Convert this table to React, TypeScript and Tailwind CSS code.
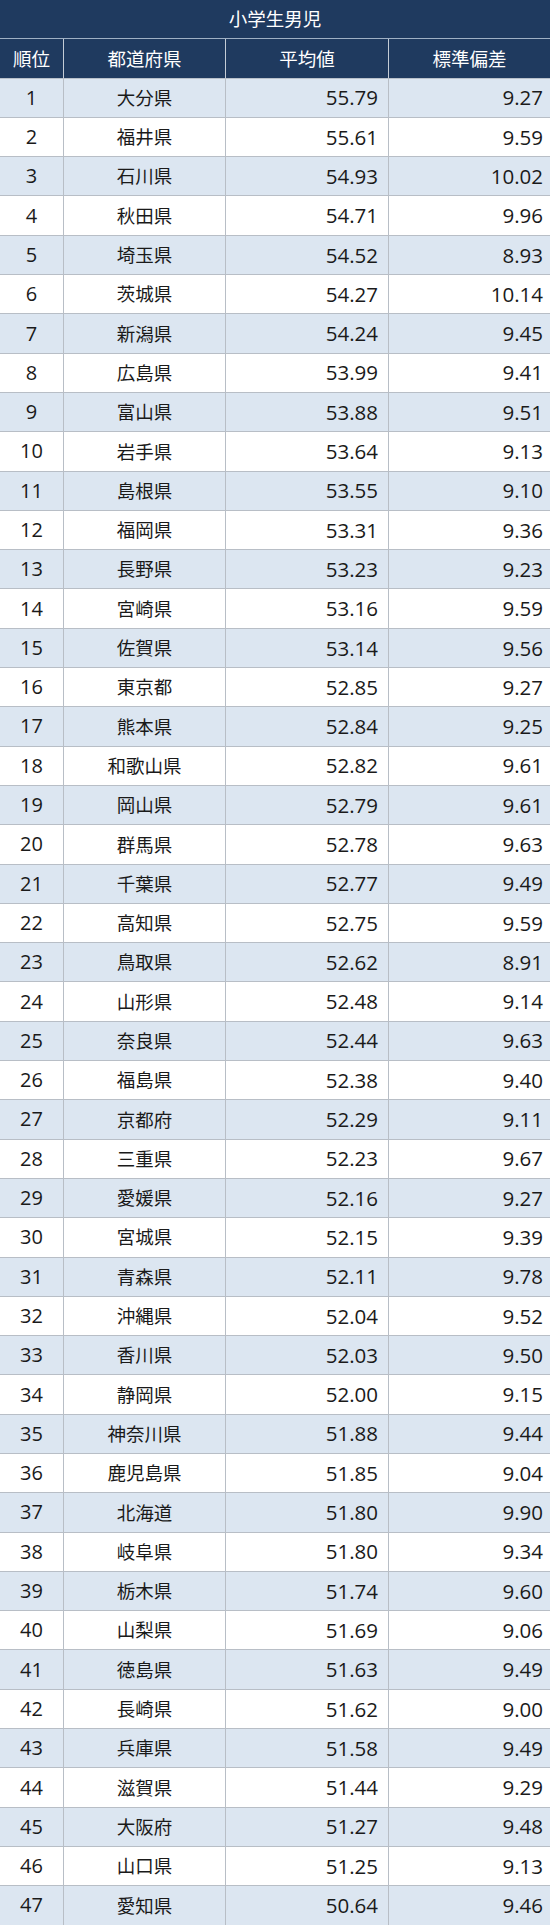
const ROWS: [string, string, string][] = [
  ['大分県', '55.79', '9.27'],
  ['福井県', '55.61', '9.59'],
  ['石川県', '54.93', '10.02'],
  ['秋田県', '54.71', '9.96'],
  ['埼玉県', '54.52', '8.93'],
  ['茨城県', '54.27', '10.14'],
  ['新潟県', '54.24', '9.45'],
  ['広島県', '53.99', '9.41'],
  ['富山県', '53.88', '9.51'],
  ['岩手県', '53.64', '9.13'],
  ['島根県', '53.55', '9.10'],
  ['福岡県', '53.31', '9.36'],
  ['長野県', '53.23', '9.23'],
  ['宮崎県', '53.16', '9.59'],
  ['佐賀県', '53.14', '9.56'],
  ['東京都', '52.85', '9.27'],
  ['熊本県', '52.84', '9.25'],
  ['和歌山県', '52.82', '9.61'],
  ['岡山県', '52.79', '9.61'],
  ['群馬県', '52.78', '9.63'],
  ['千葉県', '52.77', '9.49'],
  ['高知県', '52.75', '9.59'],
  ['鳥取県', '52.62', '8.91'],
  ['山形県', '52.48', '9.14'],
  ['奈良県', '52.44', '9.63'],
  ['福島県', '52.38', '9.40'],
  ['京都府', '52.29', '9.11'],
  ['三重県', '52.23', '9.67'],
  ['愛媛県', '52.16', '9.27'],
  ['宮城県', '52.15', '9.39'],
  ['青森県', '52.11', '9.78'],
  ['沖縄県', '52.04', '9.52'],
  ['香川県', '52.03', '9.50'],
  ['静岡県', '52.00', '9.15'],
  ['神奈川県', '51.88', '9.44'],
  ['鹿児島県', '51.85', '9.04'],
  ['北海道', '51.80', '9.90'],
  ['岐阜県', '51.80', '9.34'],
  ['栃木県', '51.74', '9.60'],
  ['山梨県', '51.69', '9.06'],
  ['徳島県', '51.63', '9.49'],
  ['長崎県', '51.62', '9.00'],
  ['兵庫県', '51.58', '9.49'],
  ['滋賀県', '51.44', '9.29'],
  ['大阪府', '51.27', '9.48'],
  ['山口県', '51.25', '9.13'],
  ['愛知県', '50.64', '9.46'],
];

const JP = "font-['Noto_Sans_CJK_JP',sans-serif]";
const NUM = "font-['Open_Sans','Noto_Sans_CJK_JP',sans-serif]";

export default function App() {
  return (
    <div className="w-[550px] bg-white text-[#1a1a1a]">
      {/* タイトル */}
      <div
        className={`flex h-[39.3px] items-center justify-center border-b border-[#9fb0c4] bg-[#1f3a5f] text-[18.5px] text-white ${JP}`}
      >
        小学生男児
      </div>

      {/* 見出し行 */}
      <div
        className={`grid h-[39.3px] grid-cols-[63px_162px_163px_162px] border-b border-[#b8c0ca] bg-[#1f3a5f] text-[18.5px] text-white ${JP}`}
      >
        <div className="flex items-center justify-center">順位</div>
        <div className="flex items-center justify-center border-l border-[#c4ccd6]">都道府県</div>
        <div className="flex items-center justify-center border-l border-[#c4ccd6]">平均値</div>
        <div className="flex items-center justify-center border-l border-[#c4ccd6]">標準偏差</div>
      </div>

      {ROWS.map(([pref, avg, sd], i) => (
        <div
          key={pref}
          className={[
            'grid h-[39.3px] grid-cols-[63px_162px_163px_162px] border-b border-[#b8bec6]',
            i % 2 === 0 ? 'bg-[#dce6f1]' : 'bg-white',
          ].join(' ')}
        >
          <div className={`flex items-center justify-center text-[20px] ${NUM}`}>{i + 1}</div>
          <div className={`flex items-center justify-center border-l border-[#b8bec6] text-[18.5px] ${JP}`}>
            {pref}
          </div>
          <div className={`flex items-center justify-end border-l border-[#b8bec6] pr-[10px] text-[20.5px] ${NUM}`}>
            {avg}
          </div>
          <div className={`flex items-center justify-end border-l border-[#b8bec6] pr-[7px] text-[20.5px] ${NUM}`}>
            {sd}
          </div>
        </div>
      ))}
    </div>
  );
}
